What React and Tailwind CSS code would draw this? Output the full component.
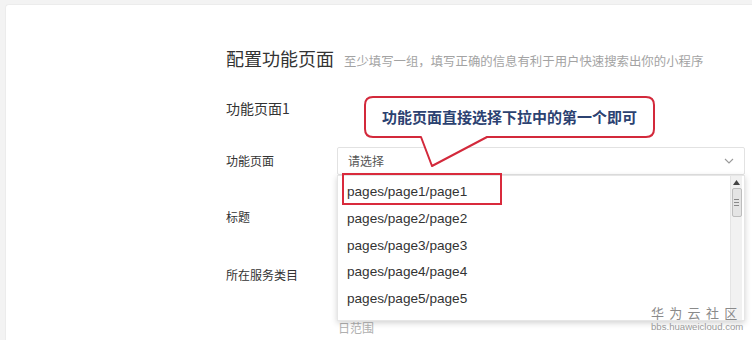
import React from "react";

const CJK = { fontFamily: '"Noto Sans CJK SC", "Noto Sans", sans-serif' };
const LAT = { fontFamily: '"Liberation Sans", "Noto Sans CJK SC", sans-serif' };

export default function App() {
  const items = ["pages/page1/page1", "pages/page2/page2", "pages/page3/page3", "pages/page4/page4", "pages/page5/page5", "pages/page6/page6"];
  return (
    <div className="relative w-[752px] h-[340px] overflow-hidden bg-[#f3f3f3] pt-[4px] pl-[5px]" style={CJK}>
      <div className="h-full bg-white rounded-tl-[4px] border-l border-t border-[#ececec] pl-[220px] pt-[41px]">
        {/* title */}
        <div className="flex items-baseline h-[24px]">
          <span className="text-[18px] leading-[24px] text-[#333]">配置功能页面</span>
          <span className="ml-[10px] text-[12.4px] text-[#a3a3a3]">至少填写一组，填写正确的信息有利于用户快速搜索出你的小程序</span>
        </div>
        <div className="mt-[28px] h-[20px] text-[14px] leading-[20px] text-[#333]">功能页面1</div>
        {/* select row */}
        <div className="mt-[29px] flex h-[28px] items-center">
          <div className="w-[111px] text-[12px] text-[#333]">功能页面</div>
          <div className="relative w-[408px] h-[28px]">
            <div className="h-full flex items-center justify-between border border-[#e2e2e2] rounded-[2px] bg-white pl-[10px] pr-[10px]">
              <span className="text-[12px] text-[#555]">请选择</span>
              <svg width="10" height="6" viewBox="0 0 10 6"><path d="M1 1 L5 5 L9 1" fill="none" stroke="#9a9a9a" strokeWidth="1.1" /></svg>
            </div>
            {/* dropdown */}
            <div className="absolute left-0 top-[28px] w-[408px] h-[146px] bg-white border border-[#e6e6e6] shadow-[0_2px_6px_rgba(0,0,0,0.18)] z-10 flex">
              <div className="flex-1 overflow-hidden pt-[3px]">
                {items.map((t) => (
                  <div key={t} className="h-[26.75px] flex items-center pl-[9px] text-[13.6px] text-[#333]" style={LAT}>{t}</div>
                ))}
              </div>
              <div className="w-[12px] mr-[2px] bg-[#f1f1f1] border-l border-[#e4e4e4] flex flex-col items-center pt-[4px]">
                <svg width="7" height="5" viewBox="0 0 7 5"><path d="M0 5 L3.5 0 L7 5 Z" fill="#444" /></svg>
                <div className="mt-[3px] w-[10px] h-[29px] rounded-[2px] border border-[#bdbdbd] bg-[#e4e4e4] flex flex-col items-center justify-center gap-[2px]">
                  <div className="w-[5px] h-px bg-[#888]" />
                  <div className="w-[5px] h-px bg-[#888]" />
                  <div className="w-[5px] h-px bg-[#888]" />
                </div>
              </div>
              <div className="absolute left-[4px] top-[-3px] w-[160px] h-[32px] border-2 border-[#d92a3c]" />
            </div>
          </div>
        </div>
        <div className="mt-[28px] flex h-[28px] items-center">
          <div className="w-[111px] text-[12px] text-[#333]">标题</div>
        </div>
        <div className="mt-[30px] flex h-[28px] items-center">
          <div className="w-[111px] text-[12px] text-[#333]">所在服务类目</div>
        </div>
        <div className="mt-[32px] pl-[112px] text-[12px] text-[#b0b0b0] leading-[14px]">日范围</div>
      </div>

      {/* callout */}
      <svg className="absolute left-0 top-0 z-20 pointer-events-none" width="752" height="340" viewBox="0 0 752 340">
        <path
          d="M373 97 H646 Q654 97 654 105 V129 Q654 137 646 137 H487 L432 166 L421 137 H373 Q365 137 365 129 V105 Q365 97 373 97 Z"
          fill="#fff"
          stroke="#d3293b"
          strokeWidth="2"
          strokeLinejoin="round"
        />
      </svg>
      <div className="absolute left-[365px] top-[97px] w-[289px] h-[40px] z-30 flex items-center justify-center text-[15px] font-bold text-[#2c4271]">
        功能页面直接选择下拉中的第一个即可
      </div>

      {/* watermark */}
      <div className="absolute left-[651px] top-[305px] z-30 flex flex-col items-start whitespace-nowrap">
        <div className="text-[13px] leading-[15px] tracking-[5.3px] text-[#8a8a8a]">华为云社区</div>
        <div className="mt-[1px] text-[9.6px] leading-[12px] text-[#9a9a9a]" style={LAT}>bbs.huaweicloud.com</div>
      </div>
    </div>
  );
}
